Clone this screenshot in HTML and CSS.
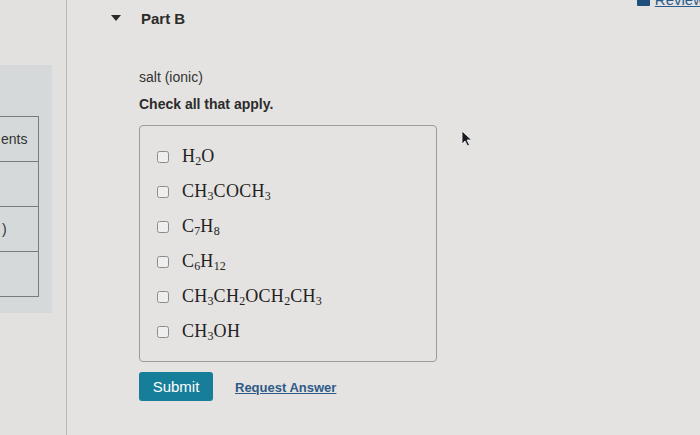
FILE: index.html
```html
<!DOCTYPE html>
<html>
<head>
<meta charset="utf-8">
<link rel="stylesheet" href="styles.css">
</head>
<body>
<div class="side">
  <div class="panel">
    <table class="tbl">
      <tr><td class="r1">ents</td></tr>
      <tr><td></td></tr>
      <tr><td class="r3">)</td></tr>
      <tr><td></td></tr>
    </table>
  </div>
</div>
<div class="main">
  <div class="header">
    <span class="tri"></span>
    <span class="part">Part B</span>
    <a class="review"><span class="rev-ico"></span><span class="rev-txt">Review</span></a>
  </div>
  <div class="content">
    <p class="prompt">salt (ionic)</p>
    <p class="check">Check all that apply.</p>
    <div class="box">
      <label class="item"><span class="cb"></span><span class="f">H<sub>2</sub>O</span></label>
      <label class="item"><span class="cb"></span><span class="f">CH<sub>3</sub>COCH<sub>3</sub></span></label>
      <label class="item"><span class="cb"></span><span class="f">C<sub>7</sub>H<sub>8</sub></span></label>
      <label class="item"><span class="cb"></span><span class="f">C<sub>6</sub>H<sub>12</sub></span></label>
      <label class="item"><span class="cb"></span><span class="f">CH<sub>3</sub>CH<sub>2</sub>OCH<sub>2</sub>CH<sub>3</sub></span></label>
      <label class="item"><span class="cb"></span><span class="f">CH<sub>3</sub>OH</span></label>
    </div>
    <div class="actions">
      <span class="submit">Submit</span>
      <a class="req">Request Answer</a>
    </div>
  </div>
  <svg class="cursor" width="12" height="17" viewBox="0 0 12 17"><path d="M1 1 L1 14 L4 11 L6.5 16 L8.5 15 L6 10 L10.5 10 Z" fill="#1a1a22" stroke="#f4f4f4" stroke-width="0.8"/></svg>
</div>
</body>
</html>
```
FILE: styles.css
```css
html, body {
  margin: 0;
  padding: 0;
}
body {
  width: 700px;
  height: 435px;
  overflow: hidden;
  display: flex;
  background: #e5e3e1;
  font-family: "Liberation Sans", Arial, sans-serif;
  color: #2a2a2a;
}
.side {
  flex: none;
  width: 67px;
  border-right: 1px solid #b9b9b9;
  padding-top: 65px;
  box-sizing: border-box;
  background: #e3e1df;
}
.panel {
  width: 52px;
  height: 248px;
  background: #d5d9d9;
  padding-top: 51px;
  box-sizing: border-box;
  overflow: hidden;
}
.tbl {
  border-collapse: collapse;
  margin-left: -1px;
  width: 40px;
}
.tbl td {
  border: 1px solid #7a7c7c;
  height: 44px;
  padding: 0;
  font-size: 14px;
  color: #333;
  white-space: nowrap;
  text-align: left;
}
.tbl td.r1 { padding-left: 1px; }
.tbl td.r3 { padding-left: 2px; }
.main {
  flex: 1;
  position: relative;
  padding-left: 44px;
}
.header {
  display: flex;
  align-items: center;
  height: 36px;
}
.tri {
  width: 0;
  height: 0;
  border-left: 5px solid transparent;
  border-right: 5px solid transparent;
  border-top: 6px solid #2a2a2a;
  margin-top: -1px;
}
.part {
  margin-left: 20px;
  font-weight: bold;
  font-size: 15px;
  color: #2b2b2b;
}
.review {
  margin-left: auto;
  align-self: flex-start;
  margin-top: -9px;
  display: flex;
  align-items: center;
  gap: 5px;
  color: #2a5b8e;
  font-size: 15px;
  text-decoration: underline;
}
.rev-ico {
  width: 13px;
  height: 13px;
  background: #1f4f7c;
  border-radius: 1px;
}
.rev-txt { margin-right: -4px; }
.content {
  margin-left: 28px;
}
.prompt {
  margin: 32px 0 0;
  font-size: 14px;
  line-height: 18px;
  color: #333;
}
.check {
  margin: 9px 0 0;
  font-size: 14px;
  line-height: 18px;
  font-weight: bold;
  color: #2b2b2b;
}
.box {
  margin-top: 12px;
  width: 298px;
  height: 237px;
  box-sizing: border-box;
  border: 1px solid #9c9c9c;
  border-radius: 4px;
  padding-top: 13px;
}
.item {
  display: flex;
  align-items: center;
  height: 35px;
  padding-left: 17px;
}
.cb {
  flex: none;
  width: 10px;
  height: 10px;
  border: 1.5px solid #8c8c8c;
  border-radius: 2.5px;
  background: #eeeeee;
}
.f {
  margin-left: 13px;
  font-family: "Liberation Serif", "Times New Roman", serif;
  font-size: 18px;
  color: #222222;
  letter-spacing: 0.3px;
}
.f sub {
  font-size: 12px;
  vertical-align: -3px;
  line-height: 0;
  letter-spacing: 0;
}
.actions {
  margin-top: 10px;
  display: flex;
  align-items: center;
  gap: 22px;
}
.submit {
  width: 74px;
  height: 29px;
  box-sizing: border-box;
  background: #177e9a;
  border-radius: 3px;
  color: #ffffff;
  font-size: 15px;
  display: flex;
  align-items: center;
  justify-content: center;
}
.req {
  font-size: 13px;
  font-weight: bold;
  color: #2d5a88;
  text-decoration: underline;
  margin-top: 2px;
}
.cursor {
  position: absolute;
  left: 394px;
  top: 130px;
}
```
